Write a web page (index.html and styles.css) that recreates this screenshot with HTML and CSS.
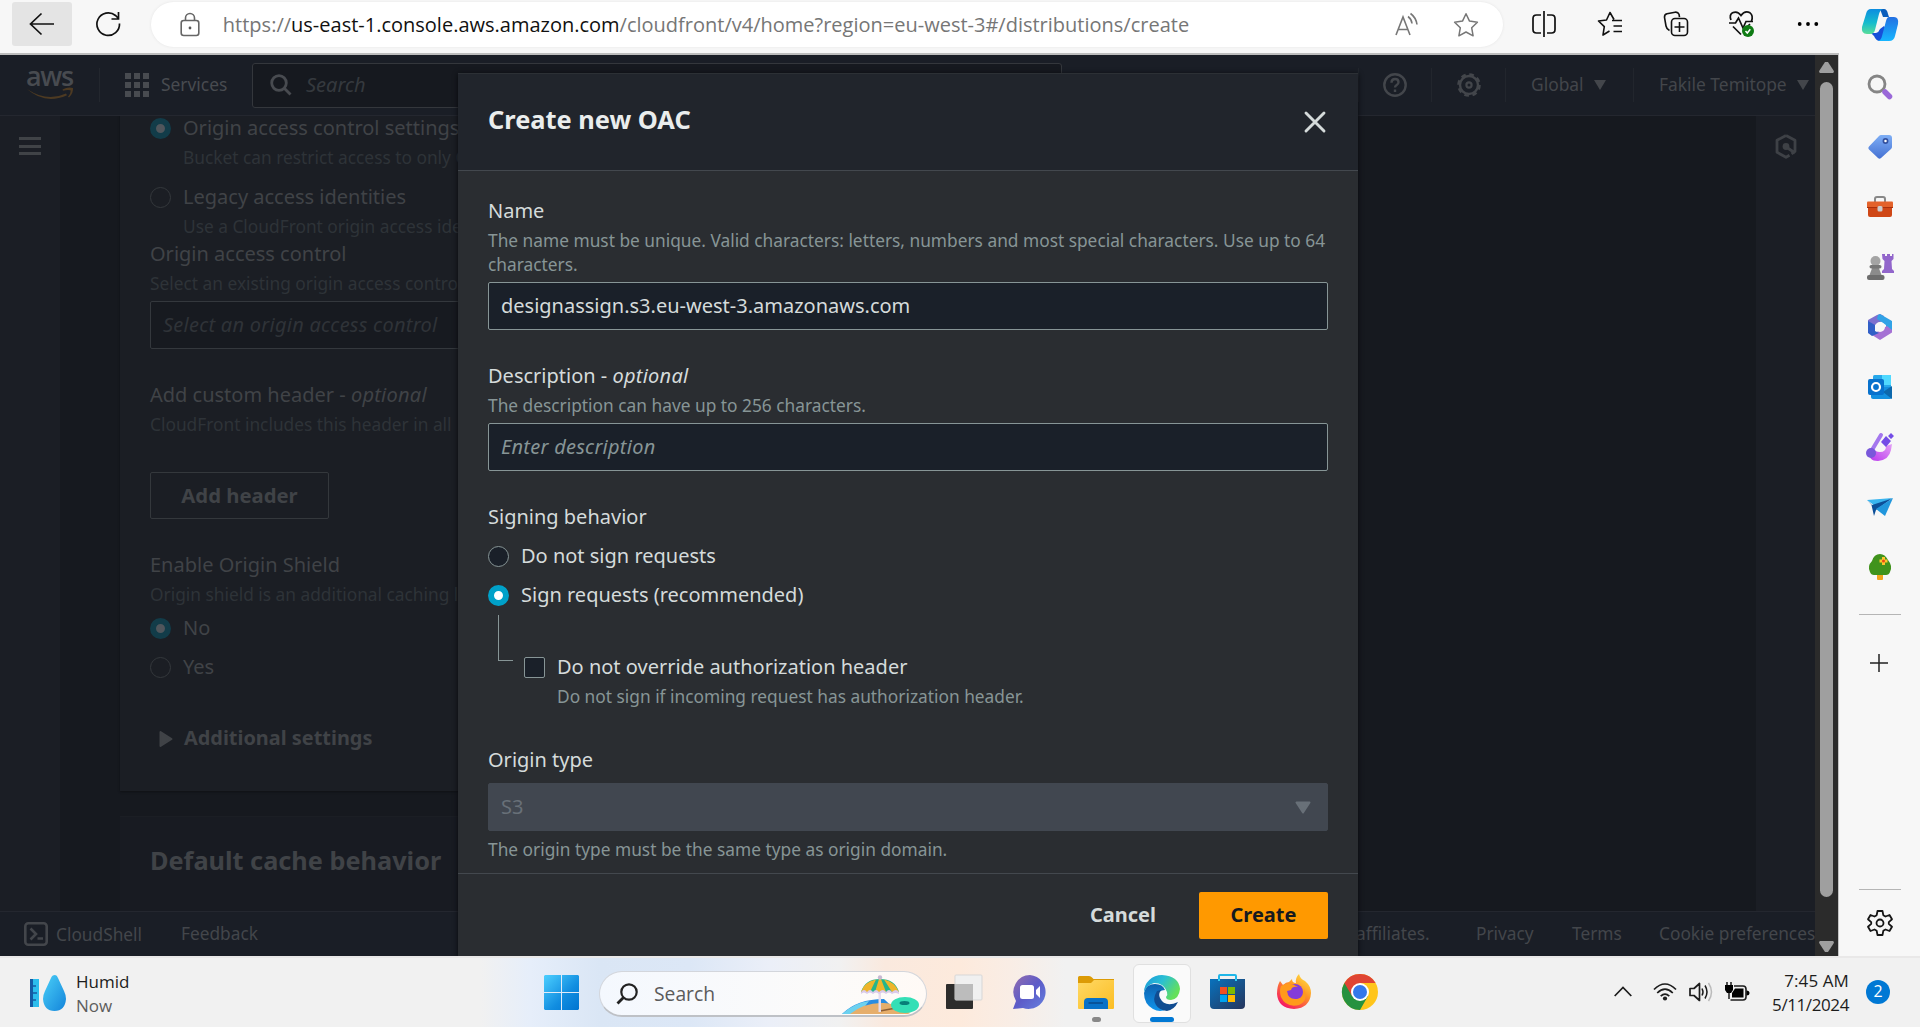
FILE: index.html
```html
<!DOCTYPE html>
<html lang="en">
<head>
<meta charset="utf-8">
<title>Create new OAC</title>
<link rel="stylesheet" href="styles.css">
</head>
<body>
<div class="screen">
  <header class="browser-bar">
    <div class="nav-btn back"><svg width="26" height="24" viewBox="0 0 26 24"><path d="M25 12H2M12.500 1.500L1.500 12l11 10.500" fill="none" stroke="#111" stroke-width="1.700"/></svg></div>
    <div class="nav-btn"><svg width="26" height="26" viewBox="0 0 26 26"><path d="M24.500 12.500A11.300 11.300 0 1 1 20.500 4.500L23 7M23.500 1v7h-7" fill="none" stroke="#111" stroke-width="1.700"/></svg></div>
    <div class="address">
      <svg class="lock" width="20" height="26" viewBox="0 0 20 26"><g fill="none" stroke="#666" stroke-width="1.600"><rect x="1.200" y="8.500" width="17.600" height="15" rx="2.500"/><path d="M5.500 8.500V6a4.500 4.500 0 0 1 9 0v2.500"/></g><circle cx="10" cy="16" r="1.400" fill="#555"/></svg>
      <span class="url">https://<b>us-east-1.console.aws.amazon.com</b>/cloudfront/v4/home?region=eu-west-3#/distributions/create</span>
      <span class="read"><svg width="26" height="26" viewBox="0 0 26 26"><g fill="none" stroke="#777" stroke-width="1.600"><path d="M2 23L9 5l7 18M4.500 17.500h9M14 4.500q3.500 2.500 4 7M16.500 1.500q5.500 4 6.500 11"/></g></svg></span>
      <span class="fav"><svg width="26" height="26" viewBox="0 0 26 26"><path d="M13 1.800l3.500 7.300 7.900 1.100-5.700 5.600 1.400 8L13 20l-7.100 3.800 1.400-8-5.700-5.600 7.900-1.100z" fill="none" stroke="#777" stroke-width="1.500" stroke-linejoin="round"/></svg></span>
    </div>
    <div class="tools">
      <span><svg width="26" height="26" viewBox="0 0 26 26"><path d="M10 4H5.500Q2 4 2 7.500v11Q2 22 5.500 22H10M16 4h4.500Q24 4 24 7.500v11q0 3.500-3.500 3.500H16M13 0v26" fill="none" stroke="#111" stroke-width="1.700"/></svg></span>
      <span><svg width="26" height="26" viewBox="0 0 26 26"><path d="M17 8.500L13 1.500 9.500 9l-8 1 5.800 5.600L6 24l6.500-4M15 9.500h10M16.500 15H25M16.500 20.500H25" fill="none" stroke="#111" stroke-width="1.600" stroke-linejoin="round"/></svg></span>
      <span><svg width="26" height="26" viewBox="0 0 26 26"><g fill="none" stroke="#111" stroke-width="1.600"><path d="M6.500 19.500Q3.500 18 3 15L1.500 6.500q-.3-3 2.500-3.700L12 1.200q3-.4 4 2l.5 3"/><rect x="8.500" y="7.500" width="16" height="17" rx="3.500"/><path d="M16.500 11v10M11.500 16h10"/></g></svg></span>
      <span><svg width="28" height="28" viewBox="0 0 28 28"><path d="M3 10Q1 5 4.500 2.800 9.500.5 13 5.500 17-.2 22 2.800 25.500 5.500 23.500 11M1 13h6.500l3-5 4.500 10 3-6.500h7M5 16.500l8 8M20 16l2-2" fill="none" stroke="#111" stroke-width="1.700"/><circle cx="20" cy="21" r="6" fill="#0f7b14"/><path d="M17.500 21l1.800 2 3-3.700" fill="none" stroke="#fff" stroke-width="1.500"/></svg></span>
      <span><svg width="22" height="6" viewBox="0 0 22 6"><circle cx="2.700" cy="3" r="1.900"/><circle cx="11" cy="3" r="1.900"/><circle cx="19.300" cy="3" r="1.900"/></svg></span>
    </div>
    <div class="copilot"><svg width="38" height="36" viewBox="0 0 38 36"><defs><linearGradient id="cp1" x1="0" y1="0" x2="0" y2="1"><stop offset="0" stop-color="#0c8ce0"/><stop offset=".55" stop-color="#16bccd"/><stop offset="1" stop-color="#59dd9a"/></linearGradient><linearGradient id="cp2" x1="0" y1="0" x2="0" y2="1"><stop offset="0" stop-color="#2370e2"/><stop offset="1" stop-color="#16b6ff"/></linearGradient></defs><path d="M10 26h5q3-1 4-4l4-3 2 3-3 12h-3q-4 0-6-5z" fill="#1750d9"/><path d="M19 2h4q3 0 4 5l1 3h-6z" fill="#0c5ebc"/><path d="M10 2h12q-3 1-4 5l-4 16q-1 4-5 4H6q-6 0-5-7L5 7q1-5 5-5z" fill="url(#cp1)"/><path d="M28 10h5q5 0 4 7l-3 12q-1 5-6 5H16q4 0 5-5l4-15q1-4 3-4z" fill="url(#cp2)"/></svg></div>
  </header>

  <main class="page">
    <section class="viewport">
      <div class="console">
        <nav class="aws-nav">
          <div class="aws-logo"><span>aws</span><svg width="48" height="14" viewBox="0 0 48 14"><path d="M1 2q20 13.500 39 4.500l1 1.700Q19 18 1 2zM36.500 2.500Q42-.5 47 1q.5 5-4 9.500l-1-.7Q45 6 44.500 3.300 41.500 2.500 37 3.800z" fill="#4d3a22"/></svg></div>
          <div class="services"><svg width="24" height="24" viewBox="0 0 24 24" fill="#484b50"><path d="M0 0h6v6H0zM9 0h6v6H9zM18 0h6v6h-6zM0 9h6v6H0zM9 9h6v6H9zM18 9h6v6h-6zM0 18h6v6H0zM9 18h6v6H9zM18 18h6v6h-6z"/></svg><span>Services</span></div>
          <div class="nav-search"><svg width="22" height="22" viewBox="0 0 22 22" fill="none" stroke="#484b50" stroke-width="2.800"><circle cx="9" cy="9" r="7.300"/><path d="M14 14l6.500 6.500"/></svg><span>Search</span></div>
          <div class="nav-right">
            <span class="cell help"><svg width="24" height="24" viewBox="0 0 24 24" fill="none" stroke="#43464b" stroke-width="2.400"><circle cx="12" cy="12" r="10.700"/><path d="M8.500 9.700q0-3.700 3.500-3.700t3.500 3.200q0 1.600-1.800 2.800T12 14.500M12 16.500V19"/></svg></span>
            <span class="cell settings"><svg width="24" height="24" viewBox="0 0 24 24" fill="none" stroke="#43464b"><circle cx="12" cy="12" r="9" stroke-width="2.400"/><circle cx="12" cy="12" r="10.600" stroke-width="2.400" stroke-dasharray="4.660 3.660"/><circle cx="12" cy="12" r="2.600" stroke-width="2.200"/></svg></span>
            <span class="cell global"><span>Global</span><i class="caret"></i></span>
            <span class="cell user"><span>Fakile Temitope</span><i class="caret"></i></span>
          </div>
        </nav>
        <div class="console-body">
          <aside class="rail"><div class="burger"><i></i><i></i><i></i></div></aside>
          <div class="content">
            <div class="panel origin">
              <div class="radio-row"><i class="radio on"></i><span>Origin access control settings</span></div>
              <p class="hint inset">Bucket can restrict access to only C</p>
              <div class="radio-row spaced"><i class="radio"></i><span>Legacy access identities</span></div>
              <p class="hint inset">Use a CloudFront origin access ide</p>
              <p class="label">Origin access control</p>
              <p class="hint">Select an existing origin access control</p>
              <div class="field"><em>Select an origin access control</em></div>
              <p class="label next">Add custom header - <em>optional</em></p>
              <p class="hint">CloudFront includes this header in all</p>
              <div class="ghost-btn">Add header</div>
              <p class="label next">Enable Origin Shield</p>
              <p class="hint">Origin shield is an additional caching l</p>
              <div class="radio-row tight"><i class="radio on"></i><span>No</span></div>
              <div class="radio-row tight"><i class="radio"></i><span>Yes</span></div>
              <div class="expander"><svg width="14" height="16" viewBox="0 0 14 16"><path d="M1.500 1v14l11-7z" fill="#404347" stroke="#404347" stroke-width="2" stroke-linejoin="round"/></svg><span>Additional settings</span></div>
            </div>
            <div class="panel cache"><h2>Default cache behavior</h2></div>
          </div>
          <aside class="rail right"><svg width="22" height="25" viewBox="0 0 22 25"><path d="M11 1.500l9 4.800v11l-3.500 2.500M11 1.500L2 6.300v12l9 5 3.500-2M12 13.500l8 5.500" fill="none" stroke="#3e4146" stroke-width="2.800" stroke-linejoin="round"/><circle cx="11" cy="12.500" r="3.400" fill="#3e4146"/></svg></aside>
        </div>
        <footer class="aws-footer">
          <span class="shell"><svg width="24" height="24" viewBox="0 0 24 24" fill="none" stroke="#43464b" stroke-width="2.600"><rect x="1.300" y="1.300" width="21.400" height="21.400" rx="3"/><path d="M6.500 6.500l5.500 5.500-5.500 5.500M13.500 16.500h5.500"/></svg>CloudShell</span>
          <span class="feedback">Feedback</span>
          <span class="affiliates">affiliates.</span>
          <span class="privacy">Privacy</span>
          <span class="terms">Terms</span>
          <span class="cookies">Cookie preferences</span>
        </footer>
      </div>
      <div class="scrollbar"><i class="up"></i><i class="thumb"></i><i class="down"></i></div>

      <div class="modal">
        <div class="modal-head"><h2>Create new OAC</h2><svg width="22" height="22" viewBox="0 0 22 22"><path d="M2 2l18 18M20 2L2 20" stroke="#d5dbdb" stroke-width="2.900" stroke-linecap="round"/></svg></div>
        <div class="modal-body">
          <p class="label">Name</p>
          <p class="hint">The name must be unique. Valid characters: letters, numbers and most special characters. Use up to 64<br>characters.</p>
          <div class="field"><span>designassign.s3.eu-west-3.amazonaws.com</span></div>
          <p class="label next">Description - <em>optional</em></p>
          <p class="hint">The description can have up to 256 characters.</p>
          <div class="field"><em>Enter description</em></div>
          <p class="label next">Signing behavior</p>
          <div class="radio-row tight"><i class="radio"></i><span>Do not sign requests</span></div>
          <div class="radio-row tight"><i class="radio on"></i><span>Sign requests (recommended)</span></div>
          <div class="nested">
            <i class="elbow"></i>
            <div class="nested-body">
              <div class="radio-row"><i class="checkbox"></i><span>Do not override authorization header</span></div>
              <p class="hint check-hint">Do not sign if incoming request has authorization header.</p>
            </div>
          </div>
          <p class="label origin-type">Origin type</p>
          <div class="field disabled"><span>S3</span><svg width="16" height="13" viewBox="0 0 16 13"><path d="M1.500 1.500h13L8 11.500z" fill="#687078" stroke="#687078" stroke-width="2" stroke-linejoin="round"/></svg></div>
          <p class="hint after">The origin type must be the same type as origin domain.</p>
        </div>
        <div class="modal-foot"><span class="cancel">Cancel</span><span class="create">Create</span></div>
      </div>
    </section>

    <aside class="edge-side">
      <span><svg width="26" height="26" viewBox="0 0 26 26"><circle cx="10" cy="10" r="8" fill="none" stroke="#858585" stroke-width="2.800"/><path d="M18 18l4.500 4.500" stroke="#9a68d8" stroke-width="5.500" stroke-linecap="round"/></svg></span>
      <span><svg width="26" height="26" viewBox="0 0 26 26"><defs><linearGradient id="tg" x1="0" y1="0" x2="0" y2="1"><stop offset="0" stop-color="#7eaef5"/><stop offset="1" stop-color="#4571d3"/></linearGradient></defs><path d="M14 1h8q3 0 3 3v9q0 1-1 2L14 24q-1.500 1.500-3 0L2 15.500q-1.500-1.500 0-3L12 2q1-1 2-1z" fill="url(#tg)"/><circle cx="18.500" cy="7" r="2.100" fill="#fff" stroke="#34519f" stroke-width="1.700"/></svg></span>
      <span><svg width="28" height="22" viewBox="0 0 28 22"><path d="M9 6V3q0-2 2-2h6q2 0 2 2v3" fill="none" stroke="#888" stroke-width="2"/><rect x="2" y="9" width="24" height="12" rx="2" fill="#cf4716"/><rect x="1" y="5.500" width="26" height="6.500" rx="1" fill="#e3622a"/><path d="M1 11.500h26" stroke="#aa300b"/><rect x="11.500" y="10" width="5" height="5.500" rx="1.500" fill="#ccc"/></svg></span>
      <span><svg width="28" height="28" viewBox="0 0 28 28"><path d="M16 1h3v2h2V1h3v2h2V1h1.500v5l-2 2 .5 8 2 2v2H16v-2l2-2 .5-8-2-2z" fill="#9266cb"/><circle cx="9.500" cy="8" r="5" fill="#a4a4a4"/><path d="M6.500 14h6l3 8h-12z" fill="#8b8b8b"/><rect x="3.500" y="12" width="12" height="3.500" rx="1.700" fill="#777"/><rect x="1" y="22" width="17.500" height="5" rx="2" fill="#6d6d6d"/></svg></span>
      <span><svg width="26" height="28" viewBox="0 0 26 28"><path d="M10 2L1 7v12l7 3V12l9-5V3l-4-2z" fill="#7d70cf"/><path d="M13 1l12 7v9l-6 1v-6l-9-6 1-4z" fill="#31a2e6"/><path d="M25 17v2.500L13 27l-8-5 8-5 7-4z" fill="#a571d4"/><path d="M1 8l7 4v6l4 2-7 3-4-3z" fill="#315fc7"/><circle cx="13" cy="14" r="5" fill="#f7f7f7"/></svg></span>
      <span><svg width="26" height="26" viewBox="0 0 26 26"><rect x="6" y="1" width="18" height="20" rx="1.500" fill="#28a8ea"/><path d="M15 1h9v10h-9z" fill="#50d9ff"/><path d="M4 13h21v10q0 2-2 2H6q-2 0-2-2z" fill="#1490df"/><path d="M25 12l-9 6 9 7z" fill="#0d68ac"/><rect x="1" y="5" width="16" height="16" rx="2" fill="#0872cd"/><circle cx="9" cy="13" r="4" fill="none" stroke="#fff" stroke-width="2.200"/></svg></span>
      <span><svg width="30" height="30" viewBox="0 0 30 30"><defs><linearGradient id="pt" x1="0" y1="1" x2="1" y2="0"><stop offset="0" stop-color="#b936ed"/><stop offset="1" stop-color="#e4a0f5"/></linearGradient></defs><path d="M5 20q-2 9 8 9 11-1 13-11l1-6-6 2q0 6-6 6-5 0-7-4z" fill="url(#pt)"/><path d="M16 3L7 18" stroke="#a477ee" stroke-width="4" stroke-linecap="round"/><circle cx="6" cy="21" r="5" fill="#7958da"/><path d="M21 4l5 5-5 6-5-5zM26 1l3 3-3 3-3-3z" fill="#744de6"/></svg></span>
      <span><svg width="28" height="20" viewBox="0 0 28 20"><path d="M1 3l26-2-18 8z" fill="#39b5ef"/><path d="M1 3l5 5 20-6.500L10 13l-2 6L5.500 8z" fill="#0c4f98"/><path d="M27 1l-8 18-9-7z" fill="#2196dc"/></svg></span>
      <span><svg width="24" height="28" viewBox="0 0 24 28"><rect x="9" y="18" width="6" height="9" rx="1" fill="#f0a51c"/><path d="M12 1q5 0 8 6 5 6 2 12-1 3-4 3H6q-3 0-4-3-3-6 2-11 2-7 8-7z" fill="#40931c"/><path d="M14 4h3v2.500h2.500v3H17V12h-3V9.500h-2.500v-3H14z" fill="#ffc52c"/><circle cx="15.500" cy="8" r="1.500" fill="#e64a18"/></svg></span>
      <i class="rule"></i>
      <b class="plus"><svg width="18" height="18" viewBox="0 0 18 18"><path d="M9 0v18M0 9h18" stroke="#222" stroke-width="1.500"/></svg></b>
      <i class="rule low"></i>
      <b class="gear"><svg width="26" height="26" viewBox="0 0 26 26" fill="none" stroke="#151515" stroke-width="1.800" stroke-linejoin="round"><path d="M10.500 1h5l.8 4.200 2.200 1.300L22.500 5 25 9.300l-3.200 2.800v1.800l3.200 2.800-2.500 4.300-4-1.500-2.200 1.300-.8 4.200h-5l-.8-4.200-2.200-1.300-4 1.500L1 16.700l3.200-2.800v-1.800L1 9.300 3.500 5l4 1.500 2.200-1.300z"/><circle cx="13" cy="13" r="3.500"/></svg></b>
    </aside>
  </main>

  <footer class="taskbar">
    <div class="weather"><svg width="36" height="36" viewBox="0 0 36 36"><defs><linearGradient id="dr" x1="0" y1="0" x2="1" y2="1"><stop offset="0" stop-color="#4bd0f8"/><stop offset="1" stop-color="#1384da"/></linearGradient></defs><rect x="0" y="4" width="9" height="28" fill="#2cbdec"/><path d="M0 4h3v28H0z" fill="#145ba4"/><path d="M3 11h3M3 18h4M3 25h3" stroke="#145ba4" stroke-width="1.300"/><path d="M25 0q2 0 3 3l6 13q2 4 2 8-1 12-11.500 12T13 24q0-4 2-8l6-13q1-3 4-3z" fill="url(#dr)"/></svg><div><span>Humid</span><small>Now</small></div></div>
    <div class="slot start"><svg width="35" height="35" viewBox="0 0 35 35"><defs><linearGradient id="wn" x1="0" y1="0" x2="1" y2="1"><stop offset="0" stop-color="#4ccfff"/><stop offset=".6" stop-color="#118de0"/><stop offset="1" stop-color="#0074d0"/></linearGradient></defs><path d="M1 0h16v17H0V1zM18 0h16l1 1v16H18zM0 18h17v17H1l-1-1zM18 18h17v16l-1 1H18z" fill="url(#wn)"/></svg></div>
    <div class="task-search">
      <svg class="mag" width="22" height="22" viewBox="0 0 22 22" fill="none" stroke="#222"><circle cx="13" cy="9" r="7.700" stroke-width="2.200"/><path d="M7.500 14.500L1.500 20.500" stroke-width="2.800"/></svg>
      <span>Search</span>
      <svg class="beach" width="78" height="40" viewBox="0 0 78 40"><path d="M0 39Q15 24 42 24l16 15z" fill="#298ce1"/><path d="M0 39Q12 28 27 26l-10 13z" fill="#6cd1ef"/><path d="M8 39q15-12 34-11 20 2 26 10l-2 1z" fill="#e6ae6b"/><path d="M38 36l16-3" stroke="#8e5e34" stroke-width="1.500"/><path d="M36.500 16h2.500v21h-2.500z" fill="#e5dcee"/><path d="M19 17Q23 4 38 4t19 13z" fill="#24b58b"/><path d="M19 17Q22 7 34 4.500L28 17zM33 17l4-13h2l5 13zM57 17Q53 7 42 4.500L50 17z" fill="#eeb52b"/><path d="M19 17q3-4 6 0 3-4 6 0 3-4 6 0 4-4 7 0 3-4 6 0 4-4 7 0v2q-4-2-7 0-3-3-6 0-3-3-7 0-3-3-6 0-3-3-6 0-3-3-6 0z" fill="#dacbea"/><circle cx="38" cy="2.500" r="2.200" fill="#c7b9d2"/><ellipse cx="63" cy="30" rx="14" ry="8" fill="#35dfb6"/><ellipse cx="62.500" cy="28" rx="5" ry="2" fill="#087e78"/></svg>
    </div>
    <div class="slot"><svg width="36" height="34" viewBox="0 0 36 34"><rect y="9" width="27" height="25" rx="1" fill="#2d2c2b"/><rect x="9" width="27" height="25" rx="1" fill="#f0f0f0" stroke="#d7d7d7"/><path d="M9 9h18v16H9z" fill="#bcbcbc"/></svg></div>
    <div class="slot"><svg width="36" height="36" viewBox="0 0 36 36"><defs><linearGradient id="cm" x1="0" y1="0" x2="1" y2="1"><stop offset="0" stop-color="#956eae"/><stop offset=".5" stop-color="#5c5bc8"/><stop offset="1" stop-color="#6681df"/></linearGradient></defs><path d="M18 1a17 17 0 1 1-7 33L1 35l3-8A17 17 0 0 1 18 1z" fill="url(#cm)"/><rect x="8" y="11" width="14" height="14" rx="2.500" fill="#fff"/><path d="M24 16l4-4v12l-4-4z" fill="#fff"/></svg></div>
    <div class="slot explorer"><svg width="36" height="33" viewBox="0 0 36 33"><defs><linearGradient id="fd" x1="0" y1="0" x2="1" y2="1"><stop offset="0" stop-color="#ffd965"/><stop offset="1" stop-color="#fbbd23"/></linearGradient></defs><path d="M0 1.500Q0 0 1.500 0H11q2 0 3 1.500L15.500 3H36v10H0z" fill="#dc9b06"/><path d="M0 7h13l3-3h20v27.500q0 1.500-1 1.500H1q-1 0-1-1z" fill="url(#fd)"/><path d="M6 33v-7q0-4 4-4h16q4 0 4 4v7z" fill="#0871c7"/><path d="M10.500 27h14.500" stroke="#084e92" stroke-width="1.700"/></svg><i></i></div>
    <div class="slot active"><div><svg width="36" height="36" viewBox="0 0 36 36"><defs><linearGradient id="eg" x1="0" y1="0" x2="1" y2=".5"><stop offset="0" stop-color="#1a96dc"/><stop offset=".5" stop-color="#2abfd3"/><stop offset="1" stop-color="#65e05a"/></linearGradient><linearGradient id="eb" x1="0" y1="0" x2="0" y2="1"><stop offset="0" stop-color="#0c61ae"/><stop offset="1" stop-color="#1194eb"/></linearGradient></defs><path d="M0 17A18 17 0 0 1 18 0q17 1 18 14-1 10-9 11-5 0-5-3 2-2 1-5Q20 8 10 8 3 10 0 17z" fill="url(#eg)"/><path d="M0 18Q2 9 11 9q8 0 10 6-7 0-8 7 1 9 10 12-7 4-14 0Q0 29 0 18z" fill="url(#eb)"/><path d="M13 16q-5 8-1 14 3 5 11 6 7-1 11-9-13 6-18-4-2-4 1-8z" fill="#104c91"/></svg><i></i></div></div>
    <div class="slot"><svg width="36" height="36" viewBox="0 0 36 36"><defs><linearGradient id="st" x1="0" y1="0" x2="1" y2="1"><stop offset="0" stop-color="#0872bd"/><stop offset="1" stop-color="#26355c"/></linearGradient></defs><path d="M9 7V2q0-1 1-1h15q1 0 1 1v5" fill="none" stroke="#1fb6e8" stroke-width="2"/><path d="M0 5h35v26q0 4-4 4H4q-4 0-4-4z" fill="url(#st)"/><path d="M10 13h7v7h-7z" fill="#f25022"/><path d="M18 13h7v7h-7z" fill="#7fba00"/><path d="M10 21h7v7h-7z" fill="#00a4ef"/><path d="M18 21h7v7h-7z" fill="#ffb900"/><path d="M9 5v2M26 5v2" stroke="#31cef5" stroke-width="2"/></svg></div>
    <div class="slot"><svg width="36" height="36" viewBox="0 0 36 36"><defs><linearGradient id="ff" x1="1" y1="0" x2=".3" y2="1"><stop offset="0" stop-color="#fff04b"/><stop offset=".45" stop-color="#ff9a25"/><stop offset="1" stop-color="#f51763"/></linearGradient></defs><path d="M4 7l3 4q3-3 6-3l3-3q0 4 4 4Q19 4 23 0q1 5 6 7 6 5 6 12-1 15-17 16Q2 34 1 20q0-8 3-13z" fill="url(#ff)"/><circle cx="19" cy="18" r="8" fill="#833cda"/><path d="M5 12q8-5 17 1-6-1-7 3l-4 1q1 9 10 8 7-1 7-10 5 11-5 16-13 3-18-8-2-6 0-11z" fill="#ff9a1b"/></svg></div>
    <div class="slot"><svg width="36" height="36" viewBox="0 0 36 36"><circle cx="18" cy="18" r="18" fill="#ffc51b"/><path d="M2.400 9A18 18 0 0 0 18 36l8-14-8-4z" fill="#26923f"/><path d="M2.400 9A18 18 0 0 1 33.600 9H18L10 22z" fill="#df4433"/><circle cx="18" cy="18" r="9" fill="#fff"/><circle cx="18" cy="18" r="7" fill="#3478ea"/></svg></div>
    <div class="tray">
      <svg class="chev" width="18" height="11" viewBox="0 0 18 11"><path d="M.7 10L9 1.500 17.300 10" fill="none" stroke="#1c1c1c" stroke-width="1.700"/></svg>
      <svg class="wifi" width="24" height="18" viewBox="0 0 24 18"><path d="M1 6.500q11-11 22 0M4.200 10q7.800-7.600 15.600 0M7.700 13.200q4.300-4 8.600 0" fill="none" stroke="#1c1c1c" stroke-width="1.700"/><circle cx="12" cy="15.500" r="2.100" fill="#1c1c1c"/></svg>
      <svg class="vol" width="24" height="20" viewBox="0 0 24 20"><path d="M1 6.500h4L10.500 1.500v17L5 13.500H1z" fill="none" stroke="#1c1c1c" stroke-width="1.700" stroke-linejoin="round"/><path d="M13 6.500q2 3.500 0 7M16 3.500q4 6.500 0 13" fill="none" stroke="#1c1c1c" stroke-width="1.500"/><path d="M19.500 1q6 9 0 18" fill="none" stroke="#bbb" stroke-width="1.500"/></svg>
      <svg class="bat" width="24" height="20" viewBox="0 0 24 20"><path d="M2 0v4M6 0v4M4 10v7" fill="none" stroke="#1c1c1c" stroke-width="1.500"/><path d="M0 3h8v5l-2 3H2L0 8z"/><path d="M9 4h9q3 0 3 3v8q0 3-3 3H5.500" fill="none" stroke="#1c1c1c" stroke-width="1.600"/><path d="M10 6.500h8.500v9H7V11zM21.500 8.500q3 0 3 2.500t-3 2.500z"/></svg>
      <div class="clock"><span>7:45 AM</span><span class="date">5/11/2024</span></div>
      <div class="badge">2</div>
    </div>
  </footer>
</div>
</body>
</html>
```
FILE: styles.css
```css
* { box-sizing: border-box; }
body { margin: 0; font: 20px/33px "Noto Sans", sans-serif; overflow: hidden; }
p, h2 { margin: 0; }
svg { display: block; flex: none; overflow: visible; }
.screen { width: 1920px; height: 1027px; display: flex; flex-direction: column; }

/* Browser toolbar */
.browser-bar { height: 53px; flex: none; display: flex; align-items: flex-start; background: #f7f7f7; padding: 2px 0 0 12px; }
.nav-btn { width: 60px; height: 44px; display: flex; align-items: center; justify-content: center; border-radius: 3px; }
.nav-btn.back { background: #e4e4e4; margin-right: 6px; }
.address { margin-left: 13px; width: 1354px; height: 45px; background: #fff; border-radius: 23px; display: flex; align-items: center; padding-left: 29px; box-shadow: 0 0 3px #e4e4e4; }
.url { font: 20px/44px "Open Sans", sans-serif; color: #767676; margin-left: 23px; width: 1155px; white-space: nowrap; }
.url b { font-weight: 400; color: #111; }
.read, .fav { width: 59px; display: flex; justify-content: center; }
.tools { display: flex; margin-left: 8px; height: 44px; }
.tools span { width: 66px; display: flex; align-items: center; justify-content: center; }
.copilot { width: 81px; height: 46px; display: flex; align-items: center; justify-content: center; margin-left: -2px; }

/* Page area */
.page { height: 903px; flex: none; display: flex; }
.viewport { width: 1839px; height: 903px; position: relative; display: flex; border-top: 2px solid #bdbdbd; border-right: 1px solid #c4c4c4; overflow: hidden; background: #16191f; }
.console { width: 1815px; display: flex; flex-direction: column; color: #404347; }
.aws-nav { height: 61px; flex: none; display: flex; align-items: center; background: #1a1e26; border-bottom: 1px solid #24272f; font-size: 17.400px; color: #484b50; }
.aws-nav span span, .services span, .nav-search span { padding-bottom: 2px; }
.aws-logo { width: 100px; height: 34px; padding-left: 26px; border-right: 1px solid #23272e; display: flex; flex-direction: column; }
.aws-logo span { font: 600 27px/22px "Open Sans", sans-serif; letter-spacing: -1.400px; margin-top: -3px; }
.services { display: flex; align-items: center; gap: 12px; margin-left: 25px; width: 127px; }
.nav-search { width: 810px; height: 45px; background: #16191f; border: 1px solid #34373c; border-radius: 3px; display: flex; align-items: center; padding-left: 17px; gap: 14px; font-size: 20px; font-style: italic; color: #35393e; }
.nav-right { display: flex; margin-left: 296px; height: 34px; align-items: center; white-space: nowrap; color: #43464b; }
.cell { height: 34px; display: flex; align-items: center; border-left: 1px solid #22262d; }
.help { width: 73px; padding-left: 24px; }
.settings { width: 74px; padding-left: 25px; }
.global { width: 128px; padding-left: 25px; gap: 10px; }
.user { padding-left: 25px; gap: 10px; width: 182px; }
.caret { width: 0; height: 0; border: 6px solid transparent; border-top: 10px solid #43464b; border-bottom: 0; }

.console-body { flex: 1; min-height: 0; display: flex; overflow: hidden; }
.rail { width: 60px; background: #1b1e25; padding: 21px 0 0 19px; }
.rail.right { padding: 18px 0 0 19px; width: 59px; }
.burger { display: flex; flex-direction: column; gap: 4.500px; }
.burger i { width: 22px; height: 3px; background: #404347; }
.content { flex: 1; padding-left: 60px; }
.panel { width: 1200px; background: #1b1e24; padding-left: 30px; white-space: nowrap; }
.origin { height: 679px; margin-top: -4px; margin-bottom: 25px; box-shadow: 0 1px 2px #0f1115; }
.cache { height: 95px; background: #181b22; border-top: 1px solid #1b1e24; padding-top: 27px; }
.label { height: 33px; line-height: 31px; }
.radio-row { display: flex; align-items: center; gap: 12px; height: 33px; }
.radio-row span, .expander span, .field span, .field em { padding-bottom: 2px; }
.radio-row.spaced { margin-top: 12px; }
.radio-row.tight { margin-top: 6px; }
.radio { width: 21px; height: 21px; border: 1.500px solid #34383c; border-radius: 50%; flex: none; }
.console .radio.on { border: 6px solid #123c49; background: #50565c; }
.hint { font-size: 17.320px; line-height: 24px; color: #2e3338; }
.inset { padding-left: 33px; }
.field { height: 48px; margin-top: 6px; border: 1px solid #34383d; border-radius: 2px; background: #171a20; padding: 0 12px; display: flex; align-items: center; }
.console .field { color: #2f3338; }
em { letter-spacing: .250px; }
.next { margin-top: 30px; }
.ghost-btn { width: 179px; height: 47px; margin-top: 36px; border: 1px solid #34383c; border-radius: 2px; font-weight: 700; font-size: 20.300px; line-height: 44px; text-align: center; }
.expander { display: flex; align-items: center; gap: 11px; font-weight: 700; font-size: 19.900px; margin: 37px 0 0 9px; }
h2 { font-size: 25.300px; line-height: 33px; font-weight: 700; }

.aws-footer { height: 45px; flex: none; background: #1a1e26; border-top: 1px solid #24272f; display: flex; align-items: center; font-size: 17.300px; color: #43464b; white-space: nowrap; padding-bottom: 1px; }
.aws-footer > span { flex: none; }
.shell { display: flex; align-items: center; gap: 8px; width: 157px; margin-left: 24px; padding-top: 1px; }
.feedback { width: 1175px; }
.affiliates { width: 120px; }
.privacy { width: 96px; }
.terms { width: 87px; }

.scrollbar { width: 23px; background: #2b2b2b; display: flex; flex-direction: column; align-items: center; padding: 7px 0 4px; }
.scrollbar .up, .scrollbar .down { width: 15px; height: 11px; background: #9f9f9f; clip-path: polygon(40% 0, 60% 0, 100% 85%, 95% 100%, 5% 100%, 0 85%); }
.scrollbar .down { transform: rotate(180deg); margin-top: auto; }
.scrollbar .thumb { width: 13px; height: 815px; margin-top: 9px; border-radius: 7px; background: #9f9f9f; }

/* Dialog */
.modal { position: absolute; left: 458px; top: 18px; width: 900px; height: 883px; background: #2a2d31; color: #d5dbdb; box-shadow: 0 1px 5px #07090c; display: flex; flex-direction: column; }
.modal-head { height: 98px; flex: none; background: #21252c; border-top: 1px solid #2c3035; border-bottom: 1px solid #43484e; display: flex; align-items: center; justify-content: space-between; padding: 0 32px 0 30px; color: #eaeded; }
.modal-head h2 { padding-bottom: 5px; font-size: 25.400px; }
.modal-body { flex: 1; padding: 24px 30px 0; }
.modal .hint { color: #879596; white-space: nowrap; }
.modal .field { border-color: #879596; background: #1a2029; }
.modal .field em { color: #879596; }
.modal .radio { border-color: #879596; background: #1a2029; }
.modal .radio.on { border: 6.500px solid #00a1c9; background: #fff; }
.checkbox { width: 21px; height: 21px; border: 1px solid #879596; border-radius: 2px; background: #1a2029; }
.nested { display: flex; padding-left: 10px; }
.elbow { width: 15px; height: 46px; margin-top: 3px; border-left: 1px solid #879596; border-bottom: 1px solid #879596; }
.nested-body { padding: 39px 0 0 11px; }
.check-hint { padding-left: 33px; }
.origin-type { margin-top: 36px; }
.modal .disabled { background: #414750; border-color: #414750; color: #687078; justify-content: space-between; padding-right: 16px; }
.after { margin-top: 6px; }
.modal-foot { height: 83px; border-top: 1px solid #43484e; display: flex; align-items: center; justify-content: flex-end; padding: 0 30px 0 0; font-weight: 700; font-size: 20px; }
.cancel { margin-right: 43px; padding-bottom: 2px; }
.create { width: 129px; height: 47px; line-height: 45px; text-align: center; background: #f90; color: #16191f; border-radius: 2px; }

/* Edge sidebar */
.edge-side { width: 81px; background: #f7f7f7; padding-top: 4px; display: flex; flex-direction: column; align-items: center; }
.edge-side span { height: 60px; display: flex; align-items: center; }
.rule { width: 42px; height: 1px; background: #b5b5b5; margin-top: 17px; flex: none; }
.plus { margin: 39px 2px 0 0; }
.low { margin-top: 217px; }
.gear { margin-top: 20px; }

/* Taskbar */
.taskbar { height: 71px; flex: none; display: flex; border-top: 2px solid #e9e8e8; background: linear-gradient(90deg, #f1f1f1 480px, #e6eefa 530px, #dae6f5 600px, #dce7f6 690px, #ebeff8 770px, #f1f1f1 840px, #fae9de 885px, #fdeadc 960px, #f9ede5 1010px, #f1f1f1 1065px); }
.weather { width: 528px; flex: none; display: flex; padding: 17px 0 0 30px; gap: 10px; font: 17px/24px "Open Sans", sans-serif; color: #1c1c1c; }
.weather div { display: flex; flex-direction: column; margin-top: -5px; }
.weather small { font-size: 17px; color: #5d5d5d; }
.slot { width: 66px; flex: none; display: flex; align-items: center; justify-content: center; position: relative; padding-bottom: 1px; }
.task-search { width: 328px; flex: none; height: 46px; margin: 13px 4px 0 5px; border: 1px solid #d3d6dc; border-bottom: 2px solid #bec1c6; border-radius: 23px; background: linear-gradient(90deg, #f4f8fe, #fcfbfa 70%, #fffaf6); display: flex; padding-left: 16px; }
.task-search .mag { margin-top: 11px; }
.task-search span { font: 19.300px/44px "Open Sans", sans-serif; color: #5b5b5b; margin-left: 16px; width: 188px; }
.beach { margin-top: 3px; }
.explorer i { position: absolute; left: 29px; bottom: 5px; width: 9px; height: 5px; border-radius: 3px; background: #888; }
.active div { width: 58px; height: 59px; margin-top: 2px; border: 1px solid #e0e0e0; border-radius: 6px; background: #fafafa; display: flex; align-items: center; justify-content: center; position: relative; }
.active i { position: absolute; left: 16px; bottom: 0; width: 24px; height: 5px; border-radius: 3px; background: #0078d4; }
.tray { display: flex; align-items: flex-start; margin-left: 221px; font: 17px/24px "Open Sans", sans-serif; color: #1c1c1c; }
.chev { margin-top: 28px; }
.wifi { margin: 25px 0 0 21px; }
.vol { margin: 24px 0 0 12px; }
.bat { margin: 24px 0 0 12px; }
.clock { width: 100px; margin-top: 11px; display: flex; flex-direction: column; text-align: right; letter-spacing: .100px; }
.date { letter-spacing: -.400px; }
.badge { width: 24px; height: 24px; margin: 22px 0 0 17px; border-radius: 50%; background: #0078d4; color: #fff; font-size: 16px; line-height: 23px; text-align: center; }
```
